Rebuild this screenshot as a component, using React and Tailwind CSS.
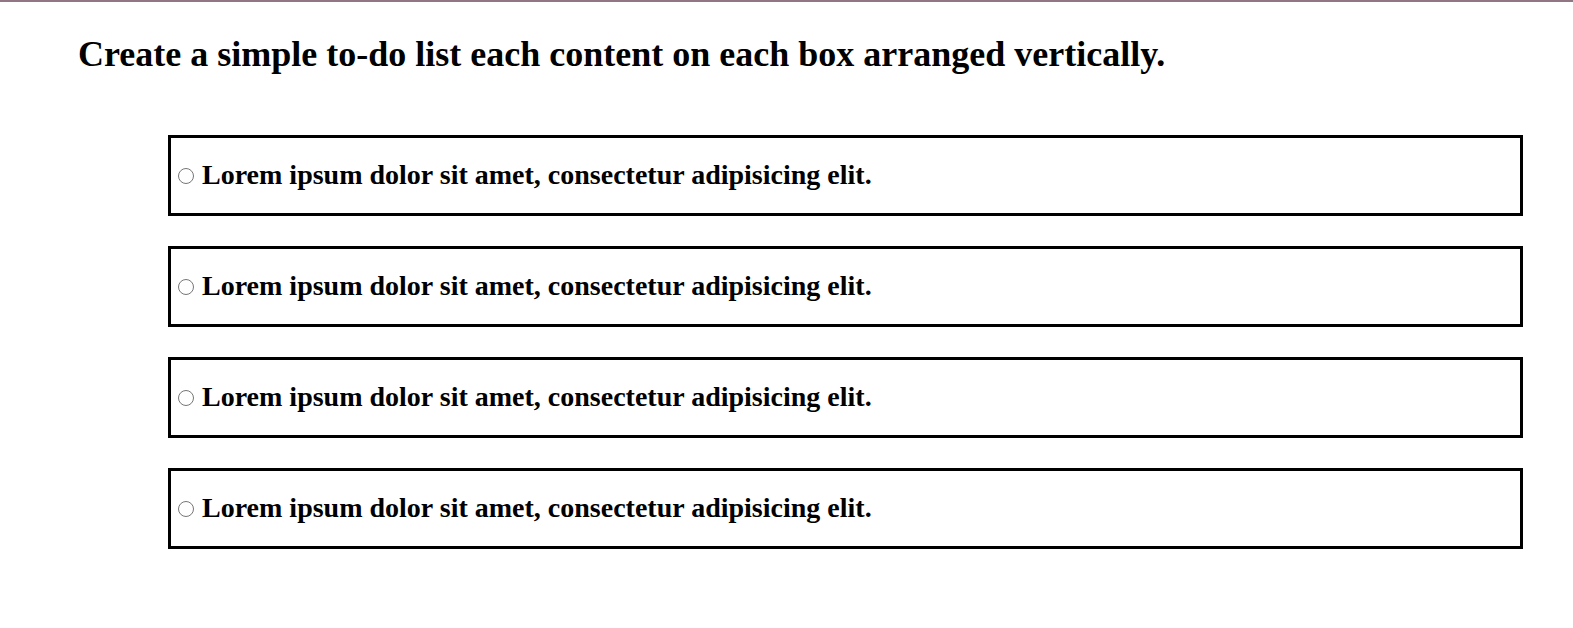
export default function App() {
  const items = [1, 2, 3, 4];
  return (
    <div className="min-h-[628px] bg-white" style={{ fontFamily: '"Liberation Serif", "Times New Roman", serif' }}>
      <div className="h-[2px] bg-[#917784]" />
      <h1 className="mt-[31px] ml-[78px] text-[36px] font-bold leading-[normal] text-black">
        Create a simple to-do list each content on each box arranged vertically.
      </h1>
      <div className="mt-[60px] ml-[168px] w-[1355px] flex flex-col gap-[30px]">
        {items.map((i) => (
          <div key={i} className="border-[3px] border-black pt-[21px] pb-[22px] pl-[2px] text-[28px] font-bold leading-[32px] text-black">
            <input type="radio" name="todo" className="ml-[5px] mr-[1px] mt-[3px] w-[16px] h-[16px]" />{" "}
            Lorem ipsum dolor sit amet, consectetur adipisicing elit.
          </div>
        ))}
      </div>
    </div>
  );
}
